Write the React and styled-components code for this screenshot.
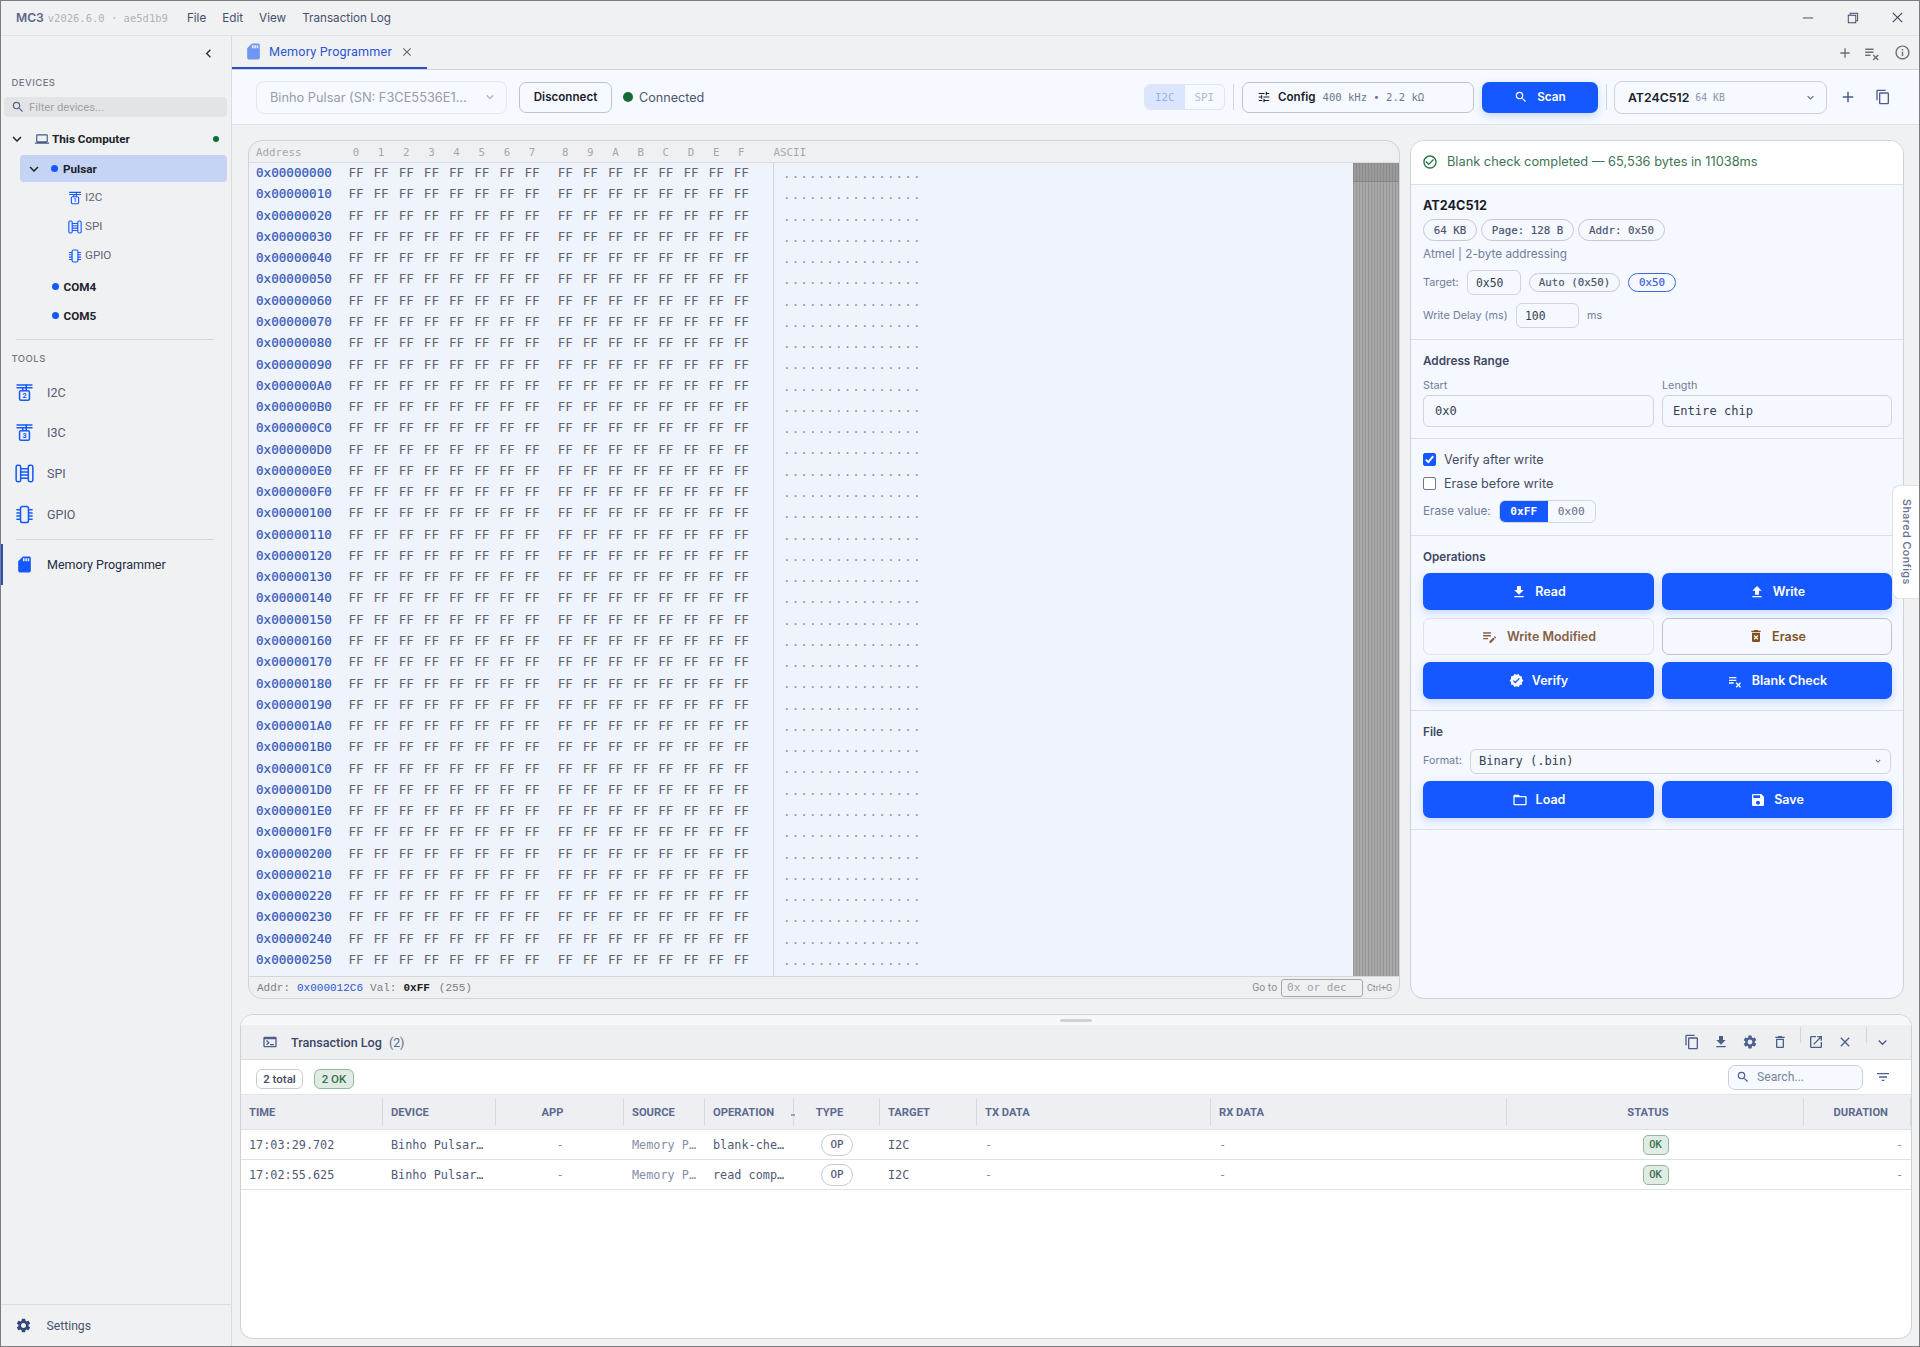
import React from 'react';
import styled, { createGlobalStyle } from 'styled-components';
import {
  MdAdd, MdCheckCircleOutline, MdClose, MdContentCopy, MdDeleteForever, MdDownload, MdEditNote,
  MdFilterList, MdFolderOpen, MdInfoOutline, MdKeyboardArrowDown, MdKeyboardArrowLeft,
  MdOpenInNew, MdOutlineDelete, MdOutlineTerminal, MdOutlineLaptop, MdPlaylistRemove, MdSave, MdSdCard,
  MdSearch, MdSettings, MdTune, MdUpload, MdVerified,
} from 'react-icons/md';
import { VscChromeClose, VscChromeMinimize, VscChromeRestore } from 'react-icons/vsc';

const mono = '"DejaVu Sans Mono", "Liberation Mono", monospace';
const inter = 'Inter, "Liberation Sans", sans-serif';
const roboto = 'Roboto, "Liberation Sans", sans-serif';

const c = {
  bg: '#f0f1f3',
  surface: '#f6f9ff',
  line: '#d5d8dd',
  blue: '#1558ff',
  deepBlue: '#2a4fbf',
  ink: '#1a1c2b',
  text: '#3c4664',
  muted: '#717d9c',
  icon: '#4b5e8c',
  green: '#156b34',
};

const GlobalStyle = createGlobalStyle`
  *, *::before, *::after { box-sizing: border-box; }
  body { margin: 0; background: ${c.bg}; font-family: ${inter}; color: ${c.text}; }
  svg { display: block; flex: none; }
`;

/* ---------- window frame ---------- */

const Window = styled.div`
  width: 1920px;
  height: 1347px;
  border: 1px solid #7d7d7f;
  background: ${c.bg};
  display: flex;
  flex-direction: column;
  overflow: hidden;
  position: relative;
  white-space: nowrap;
`;

const TitleBar = styled.header`
  height: 35px;
  flex: none;
  border-bottom: 1px solid #e0e2e5;
  display: flex;
  align-items: center;
  padding: 0 14px 1px 15px;
`;

const Brand = styled.strong`
  font: 600 12.1px ${inter};
  color: #5b678a;
`;

const Version = styled.span`
  font: 10.5px ${mono};
  color: #b0b2b8;
  margin-left: 4px;
`;

const Menu = styled.nav`
  display: flex;
  gap: 16px;
  margin-left: 19px;
  font: 11.7px ${inter};
  color: #47506b;
`;

const WindowButtons = styled.div`
  margin-left: auto;
  display: flex;
  gap: 30px;
  color: ${c.text};
`;

const Body = styled.div`
  flex: 1;
  display: flex;
  min-height: 0;
`;

/* ---------- sidebar ---------- */

const Sidebar = styled.aside`
  width: 231px;
  flex: none;
  border-right: 1px solid #d9dbdf;
  display: flex;
  flex-direction: column;
`;

const CollapseRow = styled.div`
  height: 34px;
  display: flex;
  justify-content: flex-end;
  align-items: center;
  padding-right: 14px;
  color: #333;
`;

const SectionLabel = styled.div`
  font: 500 9.5px/14px ${inter};
  letter-spacing: 0.45px;
  color: #707888;
  padding-left: 10.5px;
  margin-top: ${(p) => p.$top}px;
`;

const Filter = styled.div`
  height: 20px;
  margin: 7px 4px 0 3px;
  border-radius: 4px;
  background: #e3e4e6;
  display: flex;
  align-items: center;
  gap: 4px;
  padding-left: 7px;
  font: 11.25px ${roboto};
  color: #a0a2a7;
  svg { color: #5a6788; }
`;

const TreeNode = styled.div`
  height: ${(p) => p.$h}px;
  display: flex;
  align-items: center;
  font: 700 11.7px ${roboto};
  color: #20222a;
  margin: ${(p) => p.$top || 0}px 4px 0 ${(p) => p.$indent || 3}px;
  padding: 0 8px 0 ${(p) => p.$pad}px;
  border-radius: 4px;
  background: ${(p) => (p.$active ? '#c5d3f4' : 'transparent')};
  > svg:first-child { color: #222; }
`;

const Leaf = styled.div`
  height: 29px;
  display: flex;
  align-items: center;
  gap: 3px;
  padding-left: 67px;
  font: 11.6px ${roboto};
  color: #606678;
  svg { color: ${c.blue}; margin-top: 3px; }
`;

const Dot = styled.i`
  width: ${(p) => p.$size || 7}px;
  height: ${(p) => p.$size || 7}px;
  border-radius: 50%;
  flex: none;
  background: ${(p) => p.$color || c.blue};
`;

const Rule = styled.hr`
  border: 0;
  height: 1px;
  background: #d3d5d8;
  margin: ${(p) => p.$top}px 17px 0 15px;
`;

const Tool = styled.div`
  height: 40.6px;
  display: flex;
  align-items: center;
  gap: 13px;
  padding-left: ${(p) => (p.$active ? 12 : 14)}px;
  font: 12.5px ${roboto};
  color: ${(p) => (p.$active ? '#262d42' : '#555d74')};
  border-left: ${(p) => (p.$active ? `2px solid ${c.deepBlue}` : '0')};
  svg { color: ${c.blue}; }
`;

const SettingsRow = styled.div`
  margin-top: auto;
  height: 42px;
  border-top: 1px solid #d9dbdf;
  display: flex;
  align-items: center;
  gap: 14.5px;
  padding-left: 14px;
  font: 12.2px ${roboto};
  color: #4a556f;
  svg { color: #33477a; }
`;

/* ---------- main ---------- */

const Main = styled.main`
  flex: 1;
  min-width: 0;
  display: flex;
  flex-direction: column;
`;

const TabBar = styled.div`
  height: 34px;
  flex: none;
  border-bottom: 1px solid #d2d4d8;
  display: flex;
  align-items: stretch;
  padding-right: 8px;
  color: #6d6f75;
`;

const Tab = styled.div`
  width: 195px;
  height: 33px;
  border-bottom: 2px solid ${c.deepBlue};
  display: flex;
  align-items: center;
  padding-left: 12px;
  font: 12.6px ${roboto};
  letter-spacing: 0.19px;
  color: #2d56cf;
  svg:first-child { color: #7096f5; margin-right: 6px; }
  svg:last-child { color: #666b78; margin-left: 8px; }
`;

const TabActions = styled.div`
  margin-left: auto;
  display: flex;
  align-items: center;
`;

const Toolbar = styled.div`
  height: 55px;
  flex: none;
  background: ${c.surface};
  border-bottom: 1px solid #dee1e7;
  display: flex;
  align-items: center;
  padding: 0 28px 0 24px;
`;

const Select = styled.div`
  width: ${(p) => p.$w}px;
  height: 33px;
  border: 1px solid ${(p) => (p.$disabled ? '#e3e6ec' : '#cdd1d9')};
  border-radius: 8px;
  display: flex;
  align-items: center;
  padding: 0 9px 0 13px;
  font: ${(p) => (p.$disabled ? 400 : 600)} ${(p) => (p.$disabled ? 12.8 : 12.3)}px ${inter};
  color: ${(p) => (p.$disabled ? '#979cab' : c.ink)};
  svg { margin-left: auto; color: ${(p) => (p.$disabled ? '#a3a9b8' : '#5a6480')}; }
  small { font: 9.8px ${mono}; color: #8b94ab; margin: 1px 0 0 6px; }
`;

const Outline = styled.button`
  width: ${(p) => p.$w}px;
  height: 31px;
  margin: 0;
  padding: ${(p) => p.$pad || '0'};
  background: transparent;
  border: 1px solid #bfc3cb;
  border-radius: 7px;
  display: flex;
  align-items: center;
  justify-content: ${(p) => (p.$pad ? 'flex-start' : 'center')};
  font: 600 11.6px ${inter};
  color: ${c.ink};
  small { font: 10.55px ${mono}; color: #6d7890; margin-left: 7px; }
`;

const Primary = styled.button`
  width: ${(p) => (p.$w ? `${p.$w}px` : 'auto')};
  height: ${(p) => p.$h || 37}px;
  margin: 0;
  padding: 0;
  border: 0;
  border-radius: 7px;
  background: ${c.blue};
  box-shadow: 0 3px 9px rgba(21, 88, 255, 0.2);
  display: flex;
  align-items: center;
  justify-content: center;
  gap: ${(p) => p.$gap || 9}px;
  font: 600 ${(p) => p.$size || 12.5}px ${inter};
  color: #fff;
`;

const Warning = styled(Primary)`
  background: transparent;
  box-shadow: none;
  border: 1px solid ${(p) => (p.$faded ? '#e0e2e6' : '#bdc1ca')};
  color: ${(p) => (p.$faded ? '#85603f' : '#85501c')};
`;

const Status = styled.div`
  display: flex;
  align-items: center;
  gap: 6px;
  margin-left: 11px;
  font: 12.6px ${inter};
  color: #4d5670;
`;

const BusToggle = styled.div`
  margin-left: auto;
  width: 81px;
  height: 26px;
  border: 1px solid #e0e5ef;
  border-radius: 6px;
  display: flex;
  overflow: hidden;
  font: 10.8px ${mono};
  span {
    flex: 1;
    display: flex;
    align-items: center;
    justify-content: center;
    color: #b3bccf;
  }
  span:first-child { background: #dbe6fe; color: #94b0f2; }
`;

const VLine = styled.i`
  width: 1px;
  height: ${(p) => p.$h || 26}px;
  background: #d2d5dc;
  margin: ${(p) => p.$m || '0 8px'};
`;

const ToolbarIcons = styled.div`
  display: flex;
  align-items: center;
  gap: 18px;
  margin-left: 12px;
  color: ${c.icon};
`;

const Work = styled.div`
  flex: none;
  height: 874px;
  padding: 15px 15px 0 16px;
  display: flex;
  gap: 10px;
`;

/* ---------- hex view ---------- */

const HexPanel = styled.section`
  width: 1152px;
  height: 859px;
  border: 1px solid #d0d3d9;
  border-radius: 14px;
  display: flex;
  flex-direction: column;
  overflow: hidden;
  background: #eef0f2;
`;

const HexHead = styled.div`
  height: 22px;
  flex: none;
  border-bottom: 1px solid #d9dbdf;
  display: flex;
  align-items: center;
  padding: 2px 0 0 7px;
  font: 10.8px ${mono};
  color: #a6a8ad;
`;

const HexBody = styled.div`
  flex: 1;
  min-height: 0;
  display: flex;
  background: #eff3fc;
`;

const HexRows = styled.div`
  flex: none;
  width: 525px;
  border-right: 1px solid #cfd4df;
`;

const HexRow = styled.div`
  height: 21.28px;
  display: flex;
  align-items: center;
  padding: 0 0 2px 7px;
  font: 12.6px ${mono};
`;

const Address = styled.span`
  width: 87.4px;
  flex: none;
  color: ${(p) => (p.$head ? 'inherit' : '#3458b8')};
  -webkit-text-stroke: ${(p) => (p.$head ? 0 : 0.2)}px currentColor;
`;

const Cell = styled.span`
  width: 25.16px;
  flex: none;
  text-align: center;
  color: ${(p) => (p.$head ? 'inherit' : '#5f646e')};
  margin-left: ${(p) => (p.$gap ? 8 : 0)}px;
`;

const AsciiHead = styled.span`
  margin-left: 19.5px;
`;

const AsciiRows = styled.div`
  flex: 1;
  padding-left: 9px;
`;

const AsciiRow = styled.div`
  height: 21.28px;
  line-height: 21px;
  font-family: ${mono};
  font-size: 12.6px;
  letter-spacing: 1.08px;
  color: #8d95a5;
`;

const MiniMap = styled.div`
  width: 46px;
  background: repeating-linear-gradient(90deg, #969696 0 1px, #a8a8a8 1px 3px);
`;

const MiniMapView = styled.div`
  height: 19px;
  border-bottom: 1px solid #858585;
  background: rgba(110, 110, 110, 0.25);
`;

const HexFoot = styled.div`
  height: 22px;
  flex: none;
  border-top: 1px solid #d3d6da;
  display: flex;
  align-items: center;
  padding: 0 7px 0 8px;
  font: 11px "Liberation Mono", monospace;
  color: #7c7e84;
  b { margin-left: 7px; margin-right: 7px; font-weight: 400; color: #2b55d6; }
  strong { margin-left: 7px; margin-right: 9px; color: #222; }
  em { font-style: normal; }
`;

const GoTo = styled.label`
  margin-left: auto;
  display: flex;
  align-items: center;
  font: 10.4px ${roboto};
  color: #8c8e94;
  span {
    width: 82px;
    height: 18px;
    margin: 0 4px 0 4px;
    border: 1px solid #a4a7ad;
    border-radius: 3px;
    padding-left: 5px;
    font: 11px/16px ${mono};
    color: #a0a2a7;
  }
  small { font-size: 8.9px; }
`;

/* ---------- programmer panel ---------- */

const SidePanel = styled.section`
  flex: 1;
  height: 859px;
  border: 1px solid #ced2dc;
  border-radius: 14px;
  background: #f5f8ff;
  overflow: hidden;
`;

const Notice = styled.div`
  height: 44px;
  background: #fff;
  border-bottom: 1px solid #dcdfe5;
  display: flex;
  align-items: center;
  gap: 9px;
  padding: 0 0 2px 11px;
  font: 12.8px ${inter};
  color: #3f7458;
  svg { color: #23703f; }
`;

const Section = styled.div`
  height: ${(p) => p.$h}px;
  border-bottom: 1px solid #dcdfe6;
  padding: ${(p) => p.$top || 14}px 12px 0 12px;
`;

const ChipName = styled.h2`
  margin: 0;
  font: 700 12.65px/14px ${inter};
  color: ${c.ink};
`;

const Heading = styled.h3`
  margin: 0;
  font: 600 11.75px/14px ${inter};
  color: #3f4863;
`;

const Line = styled.div`
  display: flex;
  align-items: center;
  height: ${(p) => p.$h}px;
  margin-top: ${(p) => p.$top || 0}px;
  gap: ${(p) => p.$gap || 0}px;
`;

const Tag = styled.span`
  height: ${(p) => p.$h || 22}px;
  width: ${(p) => p.$w}px;
  border: 1px solid ${(p) => (p.$on ? '#3d68dd' : '#c6cad4')};
  border-radius: 12px;
  display: inline-flex;
  align-items: center;
  justify-content: center;
  font: ${(p) => p.$size || 10.8}px ${mono};
  -webkit-text-stroke: 0.15px currentColor;
  color: ${(p) => (p.$on ? '#3560da' : '#49526b')};
`;

const Label = styled.span`
  font: ${(p) => p.$size || 10.8}px/14px ${inter};
  color: ${c.muted};
  width: ${(p) => (p.$w ? `${p.$w}px` : 'auto')};
`;

const Field = styled.div`
  width: ${(p) => (p.$w ? `${p.$w}px` : 'auto')};
  flex: ${(p) => (p.$w ? 'none' : 1)};
  height: ${(p) => p.$h || 25}px;
  border: 1px solid #d1d4dd;
  border-radius: 6px;
  display: flex;
  align-items: center;
  padding: 0 7px 0 ${(p) => p.$pad || 8}px;
  font: ${(p) => p.$size || 11.4}px ${mono};
  color: #363e54;
  svg { margin-left: auto; color: #5a6480; }
`;

const Pair = styled.div`
  display: grid;
  grid-template-columns: 231px 230px;
  column-gap: 8px;
  row-gap: ${(p) => p.$row || 7.5}px;
  margin-top: ${(p) => p.$top}px;
`;

const Option = styled.div`
  display: flex;
  align-items: center;
  gap: 8px;
  height: 23.4px;
  font: 12.65px ${inter};
  color: #454d62;
`;

const Box = styled.i`
  width: 13px;
  height: 13px;
  border-radius: 2px;
  border: 1px solid ${(p) => (p.$on ? c.blue : '#74777f')};
  background: ${(p) => (p.$on ? c.blue : '#fff')};
  display: flex;
  align-items: center;
  justify-content: center;
`;

const EraseToggle = styled.div`
  margin-left: 7px;
  width: 97px;
  height: 23px;
  border: 1px solid #d1d5de;
  border-radius: 6px;
  overflow: hidden;
  display: flex;
  font: 11.2px ${mono};
  span { flex: 1; display: flex; align-items: center; justify-content: center; color: #666f88; }
  span:first-child { background: ${c.blue}; color: #fff; font-weight: 700; }
`;

const SharedTab = styled.div`
  position: absolute;
  right: 0;
  top: 484px;
  width: 27px;
  height: 114px;
  background: #fff;
  border: 1px solid #dfe1e5;
  border-right: 0;
  border-radius: 8px 0 0 8px;
  display: flex;
  align-items: center;
  justify-content: center;
  writing-mode: vertical-rl;
  font: 500 10.8px ${inter};
  letter-spacing: 0.42px;
  color: #666f8c;
`;

/* ---------- transaction log ---------- */

const Dock = styled.section`
  margin: 15px 7px 0 8px;
  height: 325px;
  border: 1px solid #cfd1d5;
  border-radius: 13px;
  background: #fff;
  overflow: hidden;
  display: flex;
  flex-direction: column;
`;

const Grip = styled.div`
  height: 10px;
  flex: none;
  background: #f6f7fa;
  display: flex;
  justify-content: center;
  padding-top: 4px;
  &::after { content: ''; width: 32px; height: 3px; border-radius: 2px; background: #cfd1d5; }
`;

const DockHead = styled.div`
  height: 35px;
  flex: none;
  background: #eeeff1;
  border-bottom: 1px solid #dadcdf;
  display: flex;
  align-items: center;
  padding: 0 20px 0 21px;
  font: 500 12.6px ${roboto};
  color: #3c4766;
  small { font: 12.4px ${roboto}; color: #5b6789; margin-left: 7px; }
`;

const DockIcons = styled.div`
  margin-left: auto;
  display: flex;
  align-items: center;
  gap: 13.3px;
  color: ${c.icon};
`;

const DockTools = styled.div`
  height: 34px;
  flex: none;
  display: flex;
  align-items: center;
  padding: 0 20px 0 15px;
`;

const Chip = styled.span`
  height: 20px;
  width: ${(p) => p.$w}px;
  margin: 3px ${(p) => (p.$ok ? 0 : 11)}px 0 0;
  border: 1px solid ${(p) => (p.$ok ? '#93b7a2' : '#c9ccd2')};
  border-radius: 6px;
  background: ${(p) => (p.$ok ? '#dfebe3' : '#fff')};
  display: flex;
  align-items: center;
  justify-content: center;
  font: 500 11.5px ${roboto};
  color: ${(p) => (p.$ok ? '#39734f' : '#3f4a66')};
`;

const Search = styled.div`
  margin-left: auto;
  width: 135px;
  height: 25px;
  border: 1px solid #c9cedb;
  border-radius: 7px;
  background: ${c.surface};
  display: flex;
  align-items: center;
  gap: 7px;
  padding-left: 7px;
  margin-right: 12px;
  font: 12.2px ${roboto};
  color: #7b849c;
  svg { color: #4c5c88; }
`;

const cols = '142px 113px 128px 81px 89px 86px 97px 234px 296px 297px 1fr';

const HeadRow = styled.div`
  height: 36px;
  flex: none;
  display: grid;
  grid-template-columns: ${cols};
  align-items: center;
  background: #eeeff2;
  border-top: 1px solid #e2e4e7;
  border-bottom: 1px solid #e0e2e5;
`;

const HeadCell = styled.div`
  height: 28px;
  border-right: 1px solid #d8dadd;
  display: flex;
  align-items: center;
  justify-content: ${(p) => p.$align || 'flex-start'};
  padding: 0 ${(p) => (p.$align ? (p.$align === 'center' ? 14 : 22) : 0)}px 0 ${(p) => (p.$align ? 0 : 8)}px;
  font: 700 11.2px ${roboto};
  color: #5d6a8f;
  position: relative;
`;

const SortMark = styled.i`
  position: absolute;
  right: -2px;
  bottom: 10px;
  width: 4px;
  height: 2px;
  background: #9aa2b5;
`;

const DataRow = styled(HeadRow)`
  height: 30px;
  background: #fff;
  border-top: 0;
  border-bottom: 1px solid #dfe1e5;
`;

const DataCell = styled.div`
  display: flex;
  align-items: center;
  justify-content: ${(p) => p.$align || 'flex-start'};
  padding: 0 ${(p) => (p.$align === 'flex-end' ? 8 : 0)}px 0 ${(p) => (p.$align ? 0 : 8)}px;
  font: 11.82px ${mono};
  color: ${(p) => (p.$dim ? '#858ea6' : '#4f5a77')};
`;

const OkBadge = styled.span`
  width: 26px;
  height: 20px;
  border: 1px solid #93b7a2;
  border-radius: 5px;
  background: #dfebe3;
  color: #2c6a44;
  font: 10.4px/17px ${mono};
  -webkit-text-stroke: 0.2px currentColor;
  text-align: center;
`;

/* ---------- drawn icons ---------- */

const stroke = { fill: 'none', stroke: 'currentColor', strokeLinecap: 'round', strokeLinejoin: 'round' };

const BusIcon = ({ digit, size = 20 }) => (
  <svg width={size} height={size} viewBox="0 0 20 20">
    <g {...stroke} strokeWidth="1.6">
      <path d="M1.6 2h16.8M1.6 5h16.8" strokeLinecap="butt" />
      <path d="M8.2 5v3M11.8 2v6" />
      <rect x="4.8" y="8.2" width="10.4" height="10" rx="1.6" />
    </g>
    <text x="10" y="15.9" textAnchor="middle" fontFamily="Roboto, sans-serif" fontWeight="700" fontSize="7.6" fill="currentColor">{digit}</text>
  </svg>
);

const SpiIcon = ({ size = 20 }) => (
  <svg width={size} height={size} viewBox="0 0 20 20">
    <g {...stroke} strokeWidth="1.6">
      <rect x="1.2" y="1.4" width="4.8" height="17.2" rx="1.8" />
      <rect x="14" y="1.4" width="4.8" height="17.2" rx="1.8" />
      <path d="M6.5 5h7M6.5 8.3h7M6.5 11.6h7M6.5 15h7" />
    </g>
  </svg>
);

const GpioIcon = ({ size = 20 }) => (
  <svg width={size} height={size} viewBox="0 0 20 20">
    <g {...stroke} strokeWidth="1.6">
      <rect x="5.8" y="1.5" width="8.4" height="17" rx="2.2" />
      <path d="M2 5h3.5M2 8.3h3.5M2 11.6h3.5M2 15h3.5M14.5 5h3.5M14.5 8.3h3.5M14.5 11.6h3.5M14.5 15h3.5" />
    </g>
  </svg>
);

/* ---------- data ---------- */

const hexDigits = '0123456789ABCDEF'.split('');
const addresses = Array.from({ length: 38 }, (_, i) => '0x' + (i * 16).toString(16).toUpperCase().padStart(8, '0'));
const columns = [
  ['TIME'], ['DEVICE'], ['APP', 'center'], ['SOURCE'], ['OPERATION'], ['TYPE', 'center'],
  ['TARGET'], ['TX DATA'], ['RX DATA'], ['STATUS', 'center'], ['DURATION', 'flex-end'],
];
const transactions = [
  ['17:03:29.702', 'blank-che…'],
  ['17:02:55.625', 'read comp…'],
];

function AppSidebar() {
  return (
    <Sidebar>
      <CollapseRow><MdKeyboardArrowLeft size={17} /></CollapseRow>
      <SectionLabel $top={6}>DEVICES</SectionLabel>
      <Filter><MdSearch size={14} />Filter devices...</Filter>
      <TreeNode $h={28} $top={8} $pad={4}>
        <MdKeyboardArrowDown size={18} />
        <MdOutlineLaptop size={14} color="#4a5a85" style={{ marginLeft: 9 }} />
        <span style={{ margin: '0 auto 0 3px' }}>This Computer</span>
        <Dot $size={6} $color={c.green} />
      </TreeNode>
      <TreeNode $h={27} $top={2} $indent={19} $pad={5} $active>
        <MdKeyboardArrowDown size={18} style={{ marginRight: 8 }} />
        <Dot />
        <span style={{ marginLeft: 5 }}>Pulsar</span>
      </TreeNode>
      <Leaf><BusIcon digit="1" size={14} />I2C</Leaf>
      <Leaf><SpiIcon size={14} />SPI</Leaf>
      <Leaf><GpioIcon size={14} />GPIO</Leaf>
      {['COM4', 'COM5'].map((name, i) => (
        <TreeNode key={name} $h={29} $top={i ? 0 : 3} $pad={48}>
          <Dot />
          <span style={{ marginLeft: 4.5 }}>{name}</span>
        </TreeNode>
      ))}
      <Rule $top={9} />
      <SectionLabel $top={12}>TOOLS</SectionLabel>
      <Tool style={{ marginTop: 6 }}><BusIcon digit="2" size={19} />I2C</Tool>
      <Tool><BusIcon digit="3" size={19} />I3C</Tool>
      <Tool><SpiIcon size={19} />SPI</Tool>
      <Tool><GpioIcon size={19} />GPIO</Tool>
      <Rule $top={5} />
      <Tool $active style={{ marginTop: 4 }}><MdSdCard size={19} />Memory Programmer</Tool>
      <SettingsRow><MdSettings size={17} />Settings</SettingsRow>
    </Sidebar>
  );
}

function HexView() {
  return (
    <HexPanel>
      <HexHead>
        <Address $head>Address</Address>
        {hexDigits.map((d, i) => <Cell key={d} $head $gap={i === 8}>{d}</Cell>)}
        <AsciiHead>ASCII</AsciiHead>
      </HexHead>
      <HexBody>
        <HexRows>
          {addresses.map((a) => (
            <HexRow key={a}>
              <Address>{a}</Address>
              {hexDigits.map((d, i) => <Cell key={d} $gap={i === 8}>FF</Cell>)}
            </HexRow>
          ))}
        </HexRows>
        <AsciiRows>
          {addresses.map((a) => <AsciiRow key={a}>................</AsciiRow>)}
        </AsciiRows>
        <MiniMap><MiniMapView /></MiniMap>
      </HexBody>
      <HexFoot>
        Addr:<b>0x000012C6</b>Val:<strong>0xFF</strong><em>(255)</em>
        <GoTo>Go to<span>0x or dec</span><small>Ctrl+G</small></GoTo>
      </HexFoot>
    </HexPanel>
  );
}

function ProgrammerPanel() {
  return (
    <SidePanel>
      <Notice><MdCheckCircleOutline size={16} />Blank check completed — 65,536 bytes in 11038ms</Notice>
      <Section $h={155}>
        <ChipName>AT24C512</ChipName>
        <Line $h={22} $top={6} $gap={4}>
          <Tag $w={54}>64 KB</Tag><Tag $w={93}>Page: 128 B</Tag><Tag $w={87}>Addr: 0x50</Tag>
        </Line>
        <Line $h={14} $top={5.5}><Label $size={11.75}>Atmel | 2-byte addressing</Label></Line>
        <Line $h={25} $top={9.5} $gap={8}>
          <Label $w={36}>Target:</Label><Field $w={54}>0x50</Field>
          <Tag $w={91} $h={19}>Auto (0x50)</Tag><Tag $w={48} $h={19} $on>0x50</Tag>
        </Line>
        <Line $h={25} $top={8} $gap={8}>
          <Label $w={85}>Write Delay (ms)</Label><Field $w={63}>100</Field><Label>ms</Label>
        </Line>
      </Section>
      <Section $h={99}>
        <Heading>Address Range</Heading>
        <Pair $top={11} $row={2}>
          <Label>Start</Label><Label>Length</Label>
          <Field $h={32} $pad={11} $size={12}>0x0</Field>
          <Field $h={32} $pad={10} $size={12.1}>Entire chip</Field>
        </Pair>
      </Section>
      <Section $h={97} $top={9}>
        <Option>
          <Box $on><svg width="11" height="11" viewBox="0 0 11 11"><path d="M1.8 5.6l2.6 2.6 4.8-6" fill="none" stroke="#fff" strokeWidth="1.9" /></svg></Box>
          Verify after write
        </Option>
        <Option><Box />Erase before write</Option>
        <Line $h={23} $top={5}>
          <Label $size={11.75} $w={69}>Erase value:</Label>
          <EraseToggle><span>0xFF</span><span>0x00</span></EraseToggle>
        </Line>
      </Section>
      <Section $h={175}>
        <Heading>Operations</Heading>
        <Pair $top={9}>
          <Primary $gap={8}><MdDownload size={16} />Read</Primary>
          <Primary $gap={8}><MdUpload size={16} />Write</Primary>
          <Warning $faded><MdEditNote size={17} />Write Modified</Warning>
          <Warning $gap={8}><MdDeleteForever size={16} />Erase</Warning>
          <Primary $gap={8}><MdVerified size={15} />Verify</Primary>
          <Primary><MdPlaylistRemove size={16} />Blank Check</Primary>
        </Pair>
      </Section>
      <Section $h={119}>
        <Heading>File</Heading>
        <Line $h={24} $top={10} $gap={8}>
          <Label $w={39}>Format:</Label>
          <Field $size={12.1}>Binary (.bin)<MdKeyboardArrowDown size={10} /></Field>
        </Line>
        <Pair $top={8}>
          <Primary $gap={8}><MdFolderOpen size={16} />Load</Primary>
          <Primary $gap={8}><MdSave size={16} />Save</Primary>
        </Pair>
      </Section>
    </SidePanel>
  );
}

function TransactionLog() {
  return (
    <Dock>
      <Grip />
      <DockHead>
        <MdOutlineTerminal size={16} color={c.icon} style={{ marginRight: 13 }} />
        Transaction Log<small>(2)</small>
        <DockIcons>
          <MdContentCopy size={16} /><MdDownload size={16} /><MdSettings size={16} /><MdOutlineDelete size={16} />
          <VLine $h={16} $m="-14px -6px 0 -1px" />
          <MdOpenInNew size={16} /><MdClose size={16} />
          <VLine $h={16} $m="-14px -6px 0 -1px" />
          <MdKeyboardArrowDown size={17} />
        </DockIcons>
      </DockHead>
      <DockTools>
        <Chip $w={47}>2 total</Chip>
        <Chip $w={40} $ok>2 OK</Chip>
        <Search><MdSearch size={14} />Search...</Search>
        <MdFilterList size={16} color={c.icon} />
      </DockTools>
      <HeadRow>
        {columns.map(([name, align]) => (
          <HeadCell key={name} $align={align}>{name}{name === 'OPERATION' && <SortMark />}</HeadCell>
        ))}
      </HeadRow>
      {transactions.map(([time, operation]) => (
        <DataRow key={time}>
          <DataCell>{time}</DataCell>
          <DataCell>Binho Pulsar…</DataCell>
          <DataCell $align="center" $dim>-</DataCell>
          <DataCell $dim>Memory P…</DataCell>
          <DataCell>{operation}</DataCell>
          <DataCell $align="center"><Tag $w={32} $h={22}>OP</Tag></DataCell>
          <DataCell>I2C</DataCell>
          <DataCell $dim>-</DataCell>
          <DataCell $dim>-</DataCell>
          <DataCell $align="center"><OkBadge>OK</OkBadge></DataCell>
          <DataCell $align="flex-end" $dim>-</DataCell>
        </DataRow>
      ))}
    </Dock>
  );
}

export default function App() {
  return (
    <>
      <GlobalStyle />
      <Window>
        <TitleBar>
          <Brand>MC3</Brand>
          <Version>v2026.6.0 · ae5d1b9</Version>
          <Menu><span>File</span><span>Edit</span><span>View</span><span>Transaction Log</span></Menu>
          <WindowButtons>
            <VscChromeMinimize size={15} /><VscChromeRestore size={15} /><VscChromeClose size={15} />
          </WindowButtons>
        </TitleBar>
        <Body>
          <AppSidebar />
          <Main>
            <TabBar>
              <Tab><MdSdCard size={19} />Memory Programmer<MdClose size={14} /></Tab>
              <TabActions>
                <MdAdd size={16} />
                <MdPlaylistRemove size={18} style={{ marginLeft: 10 }} />
                <MdInfoOutline size={17} style={{ marginLeft: 13 }} />
              </TabActions>
            </TabBar>
            <Toolbar>
              <Select $w={251} $disabled>Binho Pulsar (SN: F3CE5536E1…<MdKeyboardArrowDown size={14} /></Select>
              <Outline $w={93} style={{ marginLeft: 12 }}>Disconnect</Outline>
              <Status><Dot $size={10} $color={c.green} />Connected</Status>
              <BusToggle><span>I2C</span><span>SPI</span></BusToggle>
              <VLine />
              <Outline $w={232} $pad="0 0 0 14px">
                <MdTune size={14} style={{ marginRight: 7 }} />Config<small>400 kHz • 2.2 kΩ</small>
              </Outline>
              <Primary $w={116} $h={31} $size={11.75} style={{ marginLeft: 8 }}><MdSearch size={14} />Scan</Primary>
              <VLine $m="0 7px 0 8px" />
              <Select $w={213}>AT24C512<small>64 KB</small><MdKeyboardArrowDown size={13} /></Select>
              <ToolbarIcons><MdAdd size={18} /><MdContentCopy size={16} /></ToolbarIcons>
            </Toolbar>
            <Work>
              <HexView />
              <ProgrammerPanel />
            </Work>
            <TransactionLog />
          </Main>
        </Body>
        <SharedTab>Shared Configs</SharedTab>
      </Window>
    </>
  );
}
